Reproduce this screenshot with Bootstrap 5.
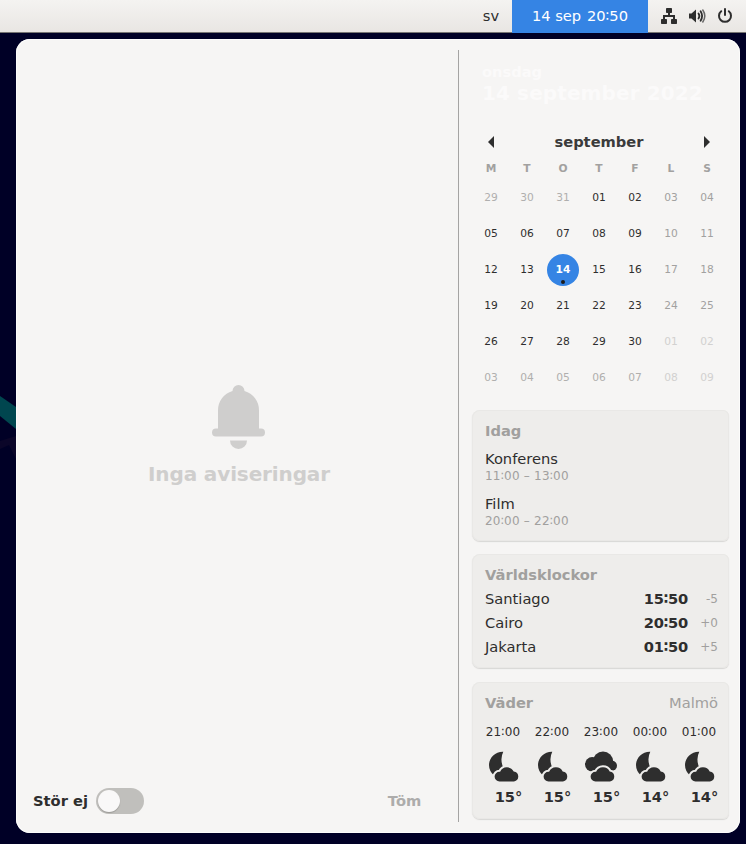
<!DOCTYPE html>
<html lang="sv">
<head>
<meta charset="utf-8">
<title>Aviseringar</title>
<link rel="stylesheet" href="https://cdn.jsdelivr.net/npm/bootstrap@5.3.0/dist/css/bootstrap.min.css">
<style>
body{width:746px;height:844px;overflow:hidden;background:#000026;color:#2e2e2e;font-family:"DejaVu Sans",sans-serif;font-size:14.667px;line-height:24px}
.wall{left:0;top:380px}
.topbar{height:33px;background:linear-gradient(#f4f3f1,#e9e6e3);border-bottom:1px solid #767573}
.topbar .lang{width:42px}
.topbar .clock{width:136px;height:33px;background:#3584e4;color:#fff;gap:6px;line-height:32px;letter-spacing:-.05px}
.tray{width:98px;padding-left:13px}
.pane{width:724px;height:794px;margin:6px 0 0 16px;background:#f6f5f4;border-radius:14px;box-shadow:inset 0 0 0 1px #fcfcfb}
.notes{width:442px}
.rule{width:1px;height:772px;margin-top:11px;background:#a5a4a3}
.side{width:270px;padding:21px 0 0 14px}
.empty{color:#cfcecd;font-size:20px;margin-top:344px;padding-left:3px}
.empty svg{display:block}
.empty div{line-height:26px;margin-top:12px;letter-spacing:-.13px;padding-left:1px}
.foot{margin-top:auto;height:26px;margin-bottom:19px;padding:0 37px 0 17px}
.toggle{width:48px;height:26px;border-radius:13px;background:#c0bfbc;padding:2px;margin-left:8px}
.toggle span{width:22px;height:22px;border-radius:50%;background:#f9f8f8;box-shadow:0 1px 1px #9a9996}
.off{color:#adacab;letter-spacing:-.2px}
.today{color:#fbfafa;padding-left:9px}
.today .wd{line-height:24px}
.today .dt{font-size:20px;line-height:18px;letter-spacing:.11px}
.month{height:24px;width:252px;margin-top:28px;padding:0 15px;color:#3b3b3b}
.cal{display:grid;grid-template-columns:repeat(7,36px);text-align:center;font-size:10.667px;line-height:36px}
.cal b{line-height:22px;height:26px;color:#a2a1a0;padding-top:4px}
.cal span{height:36px;padding:0}
.cal .we{color:#a2a1a0}
.cal .out{color:#b0afae}
.cal .far{color:#d2d1d0}
.cal .now{width:32px;height:32px;margin:2px;line-height:32px;border-radius:50%;background:#3584e4;color:#fff;font-weight:bold;position:relative}
.cal .now::after{content:"";position:absolute;left:14px;top:26px;width:4px;height:4px;border-radius:50%;background:#1c1c1c}
.tile{width:257px;margin-left:-1px;background:#eeedeb;border-radius:8px 6px 6px 8px;box-shadow:inset 0 0 0 1px #e9e8e6,0 1px 1px #d8d7d5;padding:9px 11px 0 13px;white-space:nowrap}
.dim{color:#a1a09e}
.sm{font-size:12px;line-height:16px}
.span-time{letter-spacing:.22px}
.tile b.ms-auto{letter-spacing:-.15px}
.zone{width:30px;text-align:right}
.hours{margin:9px -6px 0 -6px}
.hours>div{width:49px}
.hours .sm{letter-spacing:.2px;margin-left:-1px}
.hours svg{display:block;margin:11px 0 0 10px;fill:#2e2e2e;overflow:visible}
.hours b{display:block;padding-left:10px;margin-top:2px}
</style>
<script src="https://cdn.jsdelivr.net/npm/bootstrap@5.3.0/dist/js/bootstrap.bundle.min.js"></script>
</head>
<body>
<svg class="wall position-absolute" width="16" height="84"><path d="M0 16L16 27V49L0 36z" fill="#00464f"/><path d="M0 61L16 56V79L9 65L0 69z" fill="#0b0629"/></svg>
<header class="topbar d-flex justify-content-end">
<div class="lang text-center pt-1">sv</div>
<div class="clock d-flex justify-content-center"><span>14 sep</span><span>20∶50</span></div>
<div class="tray d-flex align-items-center">
<svg width="16" height="16" viewBox="0 0 16 16" fill="#2e2e2e"><rect x="5" width="6" height="5" rx=".7"/><rect y="11" width="6" height="5" rx=".7"/><rect x="10" y="11" width="6" height="5" rx=".7"/><path d="M7 4h2v3h5v5h-2V9H4v3H2V7h5z"/></svg>
<svg style="margin-left:11px" width="18" height="16" viewBox="0 0 18 16" fill="none" stroke="#2e2e2e" stroke-width="1.8" stroke-linecap="round"><path d="M1 5.500h2.500L8 1.500v13L3.500 10.500H1z" fill="#2e2e2e" stroke="none"/><path d="M10.500 5.500q1.800 2.500 0 5"/><path d="M12.600 3.300q3 4.700 0 9.400"/><path d="M14.800 2q4 6 0 12" opacity=".7" stroke-width="1.500"/></svg>
<svg style="margin-left:11px" width="16" height="16" viewBox="0 0 16 16" fill="none" stroke="#2e2e2e" stroke-width="2" stroke-linecap="round"><path d="M8 1v6M4.200 3.200a6 6 0 1 0 7.600 0"/></svg>
</div>
</header>
<main class="pane d-flex position-relative">
<section class="notes d-flex flex-column">
<div class="empty d-flex flex-column align-items-center fw-bold">
<svg width="54" height="66" viewBox="0.500 -.5 54 66" fill="#cfcecd"><path d="M21 7.500a6 6 0 0 1 12 0A20 20 0 0 1 47.500 27V45h2a4 4 0 0 1 0 8H4.500A4 4 0 0 1 4.500 45H6.500V27A20 20 0 0 1 21 7.500zM18.500 57h17a8.300 8.300 0 0 1-17 0z"/></svg>
<div>Inga aviseringar</div>
</div>
<div class="foot d-flex align-items-center fw-bold"><span>Stör ej</span><div class="toggle d-flex"><span></span></div><span class="off ms-auto">Töm</span></div>
</section>
<div class="rule"></div>
<aside class="side">
<div class="today fw-bold"><div class="wd">onsdag</div><div class="dt">14 september 2022</div></div>
<div class="month d-flex align-items-center justify-content-between fw-bold"><svg width="6" height="12"><path d="M6 0v12L0 6z" fill="#2e2e2e"/></svg><span>september</span><svg width="6" height="12"><path d="M0 0v12l6-6z" fill="#2e2e2e"/></svg></div>
<div class="cal">
<b>M</b><b>T</b><b>O</b><b>T</b><b>F</b><b>L</b><b>S</b>
<span class="out">29</span><span class="out">30</span><span class="out">31</span><span>01</span><span>02</span><span class="we">03</span><span class="we">04</span>
<span>05</span><span>06</span><span>07</span><span>08</span><span>09</span><span class="we">10</span><span class="we">11</span>
<span>12</span><span>13</span><span class="now">14</span><span>15</span><span>16</span><span class="we">17</span><span class="we">18</span>
<span>19</span><span>20</span><span>21</span><span>22</span><span>23</span><span class="we">24</span><span class="we">25</span>
<span>26</span><span>27</span><span>28</span><span>29</span><span>30</span><span class="far">01</span><span class="far">02</span>
<span class="out">03</span><span class="out">04</span><span class="out">05</span><span class="out">06</span><span class="out">07</span><span class="far">08</span><span class="far">09</span>
</div>
<div class="tile" style="height:131px;margin-top:14px">
<div class="dim fw-bold">Idag</div>
<div class="pt-1">Konferens</div><div class="sm dim span-time" style="margin-top:-3px">11∶00 – 13∶00</div>
<div style="margin-top:8px">Film</div><div class="sm dim span-time" style="margin-top:-3px">20∶00 – 22∶00</div>
</div>
<div class="tile" style="height:114px;margin-top:13px">
<div class="dim fw-bold">Världsklockor</div>
<div class="d-flex"><span>Santiago</span><b class="ms-auto">15∶50</b><span class="zone sm dim pt-1">-5</span></div>
<div class="d-flex"><span>Cairo</span><b class="ms-auto">20∶50</b><span class="zone sm dim pt-1">+0</span></div>
<div class="d-flex"><span>Jakarta</span><b class="ms-auto">01∶50</b><span class="zone sm dim pt-1">+5</span></div>
</div>
<div class="tile" style="height:137px;margin-top:14px">
<div class="d-flex justify-content-between dim"><b>Väder</b><span>Malmö</span></div>
<svg width="0" height="0" class="position-absolute"><defs>
<path id="puff" d="M10.500 30.500a4.900 4.900 0 0 1 0-9.800h.6a7.600 7.600 0 0 1 13.600-.3 5.100 5.100 0 0 1 .3 10.100z" stroke="#eeedeb" stroke-width="4" paint-order="stroke"/>
<g id="moon"><path d="M14.300 .7Q10.500 8 14.500 17.500L5 24.500Q0 20 0 14C0 7 6 .4 14.300.7z"/><use href="#puff"/></g>
<g id="clouds"><circle cx="7.200" cy="13.300" r="7.200"/><circle cx="18" cy="10.700" r="10.200"/><circle cx="27" cy="14.800" r="5"/><path d="M7 13h20v6.800H8z"/><use href="#puff"/></g>
</defs></svg>
<div class="hours d-flex">
<div class="text-center"><div class="sm">21∶00</div><svg width="34" height="32"><use href="#moon"/></svg><b>15°</b></div>
<div class="text-center"><div class="sm">22∶00</div><svg width="34" height="32"><use href="#moon"/></svg><b>15°</b></div>
<div class="text-center"><div class="sm">23∶00</div><svg width="34" height="32" viewBox="2 0 34 32"><use href="#clouds"/></svg><b>15°</b></div>
<div class="text-center"><div class="sm">00∶00</div><svg width="34" height="32"><use href="#moon"/></svg><b>14°</b></div>
<div class="text-center"><div class="sm">01∶00</div><svg width="34" height="32"><use href="#moon"/></svg><b>14°</b></div>
</div>
</div>
</aside>
</main>
</body>
</html>
